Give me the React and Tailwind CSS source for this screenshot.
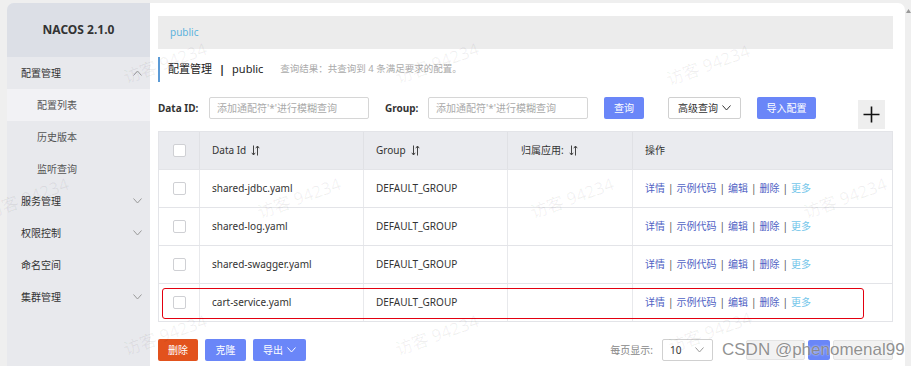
import React from "react";

const font = { fontFamily: '"Noto Sans", "Noto Sans CJK SC", sans-serif' };

function Chevron({ up = false, className = "" }) {
  return (
    <svg width="9" height="6" viewBox="0 0 9 6" className={className}>
      <path d={up ? "M0.5 5.5 L4.5 1 L8.5 5.5" : "M0.5 0.5 L4.5 5 L8.5 0.5"} fill="none" stroke="currentColor" strokeWidth="1" />
    </svg>
  );
}

function SortIcon() {
  return (
    <svg width="9" height="11" viewBox="0 0 9 11" className="ml-[5px] text-[#444]">
      <path d="M2.5 0.5 V10 M0.8 7.8 L2.5 10 L4.2 7.8" fill="none" stroke="currentColor" strokeWidth="1" />
      <path d="M6.5 10.5 V1 M4.8 3.2 L6.5 1 L8.2 3.2" fill="none" stroke="currentColor" strokeWidth="1" />
    </svg>
  );
}

function Checkbox() {
  return <div className="w-[13px] h-[13px] bg-white border border-[#cfd0d4] rounded-[2px]" />;
}

const menu = [
  { t: "配置管理", top: true, chev: "up" },
  { t: "配置列表", sel: true },
  { t: "历史版本" },
  { t: "监听查询" },
  { t: "服务管理", top: true, chev: "down" },
  { t: "权限控制", top: true, chev: "down" },
  { t: "命名空间", top: true },
  { t: "集群管理", top: true, chev: "down" },
];

const rows = ["shared-jdbc.yaml", "shared-log.yaml", "shared-swagger.yaml", "cart-service.yaml"];

const marks = [
  [165, 63], [437, 63], [708, 65],
  [27, 198], [299, 198], [572, 198], [845, 198],
  [165, 335], [437, 335], [710, 332],
];

function Actions() {
  const sep = <span className="mx-[3px] text-[#555]">|</span>;
  return (
    <div className="flex items-center text-[10px] text-[#4f62c4]">
      <span>详情</span>{sep}<span>示例代码</span>{sep}<span>编辑</span>{sep}<span>删除</span>{sep}
      <span className="text-[#74c6ea]">更多</span>
    </div>
  );
}

export default function App() {
  return (
    <div className="w-[911px] h-[366px] relative overflow-hidden bg-[#efefef]" style={font}>
      <div className="flex h-full pt-[3px] pl-[7px]">
        {/* Sidebar */}
        <div className="w-[143px] shrink-0 bg-[#e8e9ed] rounded-tl-[7px] flex flex-col overflow-hidden">
          <div className="h-[54px] bg-[#dcdfe6] flex items-center justify-center text-[12px] font-bold text-[#333]">
            NACOS 2.1.0
          </div>
          {menu.map((m) => (
            <div
              key={m.t}
              className={`h-[32px] flex items-center justify-between pr-[8px] text-[10px] ${
                m.top ? "pl-[14px] text-[#333]" : "pl-[30px] text-[#555]"
              } ${m.sel ? "bg-[#f2f2f5]" : ""}`}
            >
              <span>{m.t}</span>
              {m.chev && <Chevron up={m.chev === "up"} className="text-[#999]" />}
            </div>
          ))}
        </div>

        {/* Main */}
        <div className="flex-1 bg-white rounded-tr-[7px] pl-[8px] pr-[12px] pt-[13px] flex flex-col">
          <div className="h-[33px] bg-[#ececec] flex items-center pl-[12px] text-[10px] text-[#5cb3dd]">public</div>

          <div className="mt-[8px] h-[25px] border-l-2 border-[#5c9bd6] pl-[8px] flex items-center">
            <span className="text-[11px] text-[#222]">配置管理</span>
            <span className="text-[11px] text-[#222] mx-[7px] font-bold">|</span>
            <span className="text-[11px] text-[#222]">public</span>
            <span className="ml-[17px] text-[9.5px] text-[#aaa]">查询结果：共查询到 4 条满足要求的配置。</span>
          </div>

          <div className="mt-[15px] flex items-start">
            <div className="w-[51px] h-[22px] flex items-center text-[10px] font-bold text-[#333]">Data ID:</div>
            <div className="w-[160px] h-[22px] border border-[#d6d6d6] rounded-[2px] flex items-center pl-[7px] text-[10px] text-[#aaa]">
              添加通配符'*'进行模糊查询
            </div>
            <div className="ml-[16px] w-[43px] h-[22px] flex items-center text-[10px] font-bold text-[#333]">Group:</div>
            <div className="w-[160px] h-[22px] border border-[#d6d6d6] rounded-[2px] flex items-center pl-[7px] text-[10px] text-[#aaa]">
              添加通配符'*'进行模糊查询
            </div>
            <div className="ml-[16px] w-[40px] h-[22px] bg-[#6a86f8] rounded-[2px] flex items-center justify-center text-[10px] text-white">
              查询
            </div>
            <div className="ml-[24px] w-[73px] h-[22px] border border-[#d0d0d0] rounded-[2px] flex items-center justify-center gap-[4px] text-[10px] text-[#333]">
              高级查询 <Chevron className="text-[#333]" />
            </div>
            <div className="ml-[16px] w-[59px] h-[22px] bg-[#6a86f8] rounded-[2px] flex items-center justify-center text-[10px] text-white">
              导入配置
            </div>
            <div className="ml-[42px] mt-[3px] w-[27px] h-[29px] bg-[#eeeeee] flex items-center justify-center">
              <svg width="17" height="17" viewBox="0 0 17 17">
                <path d="M8.5 0.5 V16.5 M0.5 8.5 H16.5" stroke="#111" strokeWidth="1.6" />
              </svg>
            </div>
          </div>

          {/* Table */}
          <div className="mt-[2px] relative border border-[#e3e4e8]">
            <div className="grid grid-cols-[41px_164px_144px_125px_1fr] h-[37px] bg-[#eaebef] text-[10px] text-[#333]">
              <div className="flex items-center justify-center border-r border-[#e0e1e5]"><Checkbox /></div>
              <div className="flex items-center pl-[12px] border-r border-[#e0e1e5]">Data Id<SortIcon /></div>
              <div className="flex items-center pl-[12px] border-r border-[#e0e1e5]">Group<SortIcon /></div>
              <div className="flex items-center pl-[13px] border-r border-[#e0e1e5]">归属应用:<SortIcon /></div>
              <div className="flex items-center pl-[12px]">操作</div>
            </div>
            {rows.map((r) => (
              <div key={r} className="grid grid-cols-[41px_164px_144px_125px_1fr] h-[38px] border-t border-[#e3e4e8] text-[10px] text-[#333]">
                <div className="flex items-center justify-center border-r border-[#e8e9ec]"><Checkbox /></div>
                <div className="flex items-center pl-[12px] border-r border-[#e8e9ec]">{r}</div>
                <div className="flex items-center pl-[12px] border-r border-[#e8e9ec]">DEFAULT_GROUP</div>
                <div className="border-r border-[#e8e9ec]" />
                <div className="flex items-center pl-[12px]"><Actions /></div>
              </div>
            ))}
            <div className="absolute left-[3px] top-[156px] w-[702px] h-[31px] border-[1.5px] border-[#e3000f] rounded-[3px]" />
          </div>

          {/* Bottom */}
          <div className="mt-[17px] flex items-center justify-between">
            <div className="flex items-center gap-[7px] text-[10px] text-white">
              <div className="w-[40px] h-[22px] bg-[#e2521d] rounded-[2px] flex items-center justify-center">删除</div>
              <div className="w-[41px] h-[22px] bg-[#6a86f8] rounded-[2px] flex items-center justify-center">克隆</div>
              <div className="w-[53px] h-[22px] bg-[#6a86f8] rounded-[2px] flex items-center justify-center gap-[4px]">
                导出 <Chevron className="text-white" />
              </div>
            </div>
            <div className="flex items-center">
              <span className="text-[10px] text-[#888]">每页显示:</span>
              <div className="ml-[9px] w-[51px] h-[22px] border border-[#d0d0d0] rounded-[2px] flex items-center justify-between pl-[7px] pr-[8px] text-[10px] text-[#333]">
                10 <Chevron className="text-[#999]" />
              </div>
              <div className="ml-[33px] w-[59px] h-[20px] bg-[#f2f2f2] border border-[#e4e4e4] rounded-[2px]" />
              <div className="ml-[3px] w-[22px] h-[20px] bg-[#6a86f8] rounded-[2px]" />
              <div className="ml-[3px] w-[60px] h-[20px] bg-[#f2f2f2] border border-[#e4e4e4] rounded-[2px]" />
            </div>
          </div>
        </div>

        {/* Scrollbar */}
        <div className="w-[6px] shrink-0 flex justify-center pt-[6px]">
          <svg width="5" height="4" viewBox="0 0 5 4"><path d="M2.5 0 L5 4 H0 Z" fill="#999" /></svg>
        </div>
      </div>

      {marks.map(([x, y], i) => (
        <div
          key={i}
          className="absolute pointer-events-none whitespace-nowrap text-[17px] text-black/[0.06] -translate-x-1/2 -translate-y-1/2 rotate-[-20deg]"
          style={{ left: x, top: y }}
        >
          访客 94234
        </div>
      ))}

      <div
        className="absolute left-[722px] top-[337px] text-[17px] text-[#7d7d7d]/[0.85] whitespace-nowrap pointer-events-none"
        style={{ fontFamily: '"Liberation Sans", Arial, sans-serif', textShadow: "0 0 2px rgba(255,255,255,0.9)" }}
      >
        CSDN @phenomenal99
      </div>
    </div>
  );
}
